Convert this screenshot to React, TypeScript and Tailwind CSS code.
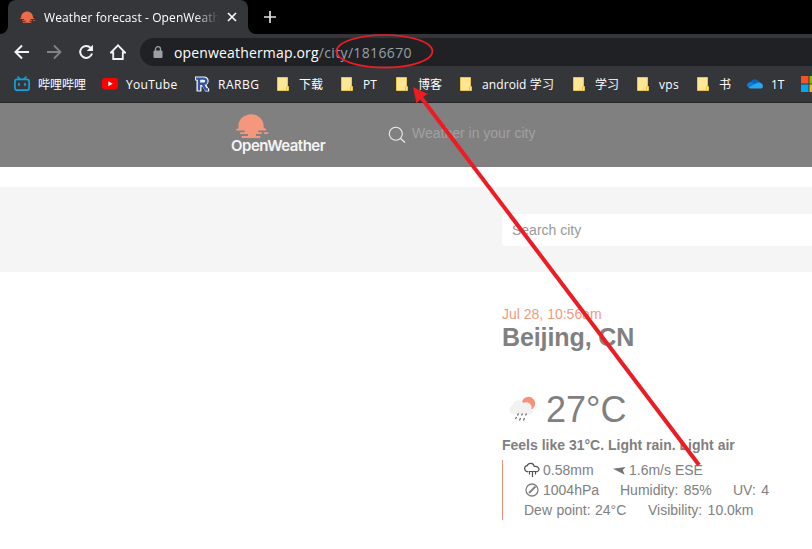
import React from "react";

const uiFont = "font-['Open_Sans','Noto_Sans_CJK_SC',sans-serif]";

function Sun({ className, fill }: { className: string; fill: string }) {
  return (
    <svg className={className} viewBox="0 0 34 26" fill={fill}>
      <path d="M2.500 13.500C1.500 6 8 .2 15 .2S28.500 6 27.600 13.500L29.500 14.700c1.300 0 1.300 1.700 0 1.700H23c-1.300 0-1.300 1.800 0 1.800h2c1.300 0 1.300 1.900 0 1.900h-5v2h3.500c1.300 0 1.300 1.900 0 1.900H6.500c-1.300 0-1.300-1.900 0-1.900H12v-2H5c-1.300 0-1.300-1.900 0-1.900h3c1.300 0 1.300-1.800 0-1.800H.9c-1.300 0-1.300-1.700 0-1.700h1.600z" />
      <rect x="27.800" y="18.200" width="4.600" height="1.900" rx=".95" />
    </svg>
  );
}

function Folder() {
  return (
    <svg className="block h-[14px] w-3" viewBox="0 0 12 14">
      <path d="M.5.500h10v9h1v4H.5z" fill="#ffe694" stroke="#e9c44c" />
      <path d="M9.500 9.500v4" stroke="#e9c44c" />
    </svg>
  );
}

function Bili() {
  return (
    <svg className="block size-4" viewBox="0 0 16 16" fill="none" stroke="#12a2d9" strokeWidth="1.7" strokeLinecap="round">
      <rect x=".9" y="3.400" width="14.200" height="10.800" rx="2.300" />
      <path d="M4 1l2 2M12 1l-2 2M5 7.500v1.700M11 7.500v1.700" />
    </svg>
  );
}

function YouTube() {
  return (
    <svg className="block size-4" viewBox="0 0 16 16">
      <rect y="2" width="16" height="11.400" rx="2.800" fill="#f00" />
      <path d="M6.300 5.200v5l4.400-2.500z" fill="#fff" />
    </svg>
  );
}

function Rarbg() {
  return (
    <svg className="block size-4" viewBox="0 0 16 16">
      <path d="M1 .5h9c5.500 0 6 6.700 2.500 8.300l1.700 3.400h1v3.300h-4L8.500 10.500H7.500v5H2.500V4.500H1z" fill="#f1f4fb" />
      <path d="M2 2.600h7.500c3.800 0 3.800 5.200 0 5.200H5.300M5 2.600v11.900M8.800 8l3 5.500h2.200" fill="none" stroke="#35549f" strokeWidth="2.400" />
    </svg>
  );
}

function OneDrive() {
  return (
    <svg className="block size-4" viewBox="0 0 16 16">
      <path d="M3 8.500C3.500 3.500 8.500 1 12.300 5.500L14 9z" fill="#0864b4" />
      <path d="M0 9.800c0-3 3-4.700 5.500-3.200L11 11H3c-2 0-3-.2-3-1.200z" fill="#107ed6" />
      <path d="M1.200 11.700l8-4.500c3-2 6.800 0 6.800 2.700 0 2-1 2.700-3 2.700H3.300z" fill="#28a8ea" />
    </svg>
  );
}

function Microsoft() {
  return (
    <svg className="block size-4" viewBox="0 0 16 16">
      <path d="M0 0h7.500v7.500H0z" fill="#f35325" />
      <path d="M8.500 0H16v7.500H8.500z" fill="#81bc06" />
      <path d="M0 8.500h7.500V16H0z" fill="#05a6f0" />
      <path d="M8.500 8.500H16V16H8.500z" fill="#ffba08" />
    </svg>
  );
}

const bookmarks = [
  { label: "哔哩哔哩", icon: <Bili />, width: "w-[88px]", gap: "gap-2" },
  { label: "YouTube", icon: <YouTube />, width: "w-[92px] tracking-[0.3px]", gap: "gap-2" },
  { label: "RARBG", icon: <Rarbg />, width: "w-[83px] tracking-[0.5px]", gap: "gap-2" },
  { label: "下载", icon: <Folder />, width: "w-[64px]", gap: "gap-2.5" },
  { label: "PT", icon: <Folder />, width: "w-[55px]", gap: "gap-2.5" },
  { label: "博客", icon: <Folder />, width: "w-[64px]", gap: "gap-2.5" },
  { label: "android 学习", icon: <Folder />, width: "w-[113px] tracking-[0.1px]", gap: "gap-2.5" },
  { label: "学习", icon: <Folder />, width: "w-[64px]", gap: "gap-2.5" },
  { label: "vps", icon: <Folder />, width: "w-[60px] tracking-[0.3px]", gap: "gap-2.5" },
  { label: "书", icon: <Folder />, width: "w-[50px]", gap: "gap-2.5" },
  { label: "1T", icon: <OneDrive />, width: "w-[54px]", gap: "gap-2" },
  { label: "", icon: <Microsoft />, width: "w-[30px]", gap: "gap-2" },
];

function TabStrip() {
  return (
    <div className="flex h-[34px] bg-black">
      <div className="flex w-2 items-end bg-[#35363a]">
        <div className="h-full w-full rounded-br-lg bg-black" />
      </div>
      <div className="flex w-60 items-center rounded-t-lg bg-[#35363a] pl-3">
        <Sun className="h-[13px] w-4 shrink-0" fill="#ee6b4a" />
        <div className="ml-2 w-[175px] overflow-hidden whitespace-nowrap pt-px text-xs tracking-[0.1px] text-white [mask-image:linear-gradient(to_right,black_86%,transparent)]">
          Weather forecast - OpenWeath
        </div>
        <svg className="ml-[7px] size-3 shrink-0" viewBox="0 0 12 12" stroke="#fff" strokeWidth="1.600">
          <path d="M2 2l8 8M10 2l-8 8" />
        </svg>
      </div>
      <div className="w-2 bg-[#35363a]">
        <div className="h-full w-full rounded-bl-lg bg-black" />
      </div>
      <svg className="ml-2 mt-[11px] size-3" viewBox="0 0 12 12" stroke="#dfe1e5" strokeWidth="1.700">
        <path d="M6 0v12M0 6h12" />
      </svg>
    </div>
  );
}

function Toolbar() {
  return (
    <div className="flex h-[34px] items-center pt-[2px]">
      <svg className="ml-[14px] h-4 w-4 shrink-0" viewBox="0 0 16 16" fill="none" stroke="#f1f3f4" strokeWidth="2">
        <path d="M15 8H2M8 1.500L1.500 8 8 14.500" />
      </svg>
      <svg className="ml-4 h-4 w-4 shrink-0" viewBox="0 0 16 16" fill="none" stroke="#828387" strokeWidth="1.800">
        <path d="M1 8h13M8 1.500L14.500 8 8 14.500" />
      </svg>
      <svg className="ml-4 h-4 w-4 shrink-0" viewBox="0 0 16 16" fill="none" stroke="#f1f3f4" strokeWidth="2">
        <path d="M14 9.500A6 6 0 1 1 12.700 3.900" />
        <path d="M15 .7V7H8.700z" fill="#f1f3f4" stroke="none" />
      </svg>
      <svg className="ml-4 h-4 w-4 shrink-0" viewBox="0 0 16 16" fill="none" stroke="#f1f3f4" strokeWidth="1.800">
        <path d="M1 8.500L8 1.300l7 7.200h-2.200V15H3.200V8.500z" />
      </svg>
      <div className="ml-[14px] flex h-7 flex-1 items-center rounded-l-full bg-[#202124] pl-[13px]">
        <svg className="h-3 w-[10px]" viewBox="0 0 10 12">
          <path d="M1 5h8v6.500H1z" fill="#9aa0a6" stroke="#9aa0a6" />
          <path d="M2.500 5V3a2.500 2.300 0 0 1 5 0v2" fill="none" stroke="#9aa0a6" strokeWidth="1.300" />
        </svg>
        <div className="ml-[11px] whitespace-nowrap text-[14px] tracking-[0.16px] text-white">
          openweathermap.org<span className="tracking-[0.36px] text-[#9aa0a6]">/city/1816670</span>
        </div>
      </div>
    </div>
  );
}

function BookmarkBar() {
  return (
    <div className="flex h-[34px] overflow-hidden pl-[14px] text-xs text-white">
      {bookmarks.map((b, i) => (
        <div key={i} className={`flex h-8 shrink-0 items-center whitespace-nowrap ${b.width} ${b.gap}`}>
          {b.icon}
          <span className="pt-[2px]">{b.label}</span>
        </div>
      ))}
    </div>
  );
}

function Annotation() {
  return (
    <svg className="pointer-events-none absolute inset-0 h-[549px] w-[812px]" viewBox="0 0 812 549">
      <ellipse cx="384.500" cy="51.300" rx="48" ry="16.300" fill="none" stroke="#ed1c24" strokeWidth="1.700" />
      <path d="M699 465L420 96" stroke="#ed1c24" strokeWidth="4" />
      <path d="M413 87L416.500 103.500 420.500 99 425 95.500 428 94z" fill="#ed1c24" />
    </svg>
  );
}

export default function App() {
  return (
    <div className="relative h-[549px] w-[812px] overflow-hidden bg-white font-['Liberation_Sans',sans-serif]">
      <header className={`h-[103px] border-b border-[#242528] bg-[#35363a] ${uiFont}`}>
        <TabStrip />
        <Toolbar />
        <BookmarkBar />
      </header>

      <nav className="flex h-16 bg-[#808080]">
        <div className="ml-[231px] w-[157px] pt-[11px]">
          <Sun className="ml-[5px] h-[26px] w-[34px]" fill="#f5977c" />
          <div className="-mt-[3px] whitespace-nowrap font-['Inter',sans-serif] text-[15px] font-semibold leading-[18px] tracking-[-0.5px] text-[#f4f4f4]">OpenWeather</div>
        </div>
        <svg className="mt-[23px] h-[18px] w-[18px]" viewBox="0 0 18 18" fill="none" stroke="#eee" strokeWidth="1.100">
          <circle cx="7.800" cy="7.800" r="6.500" />
          <path d="M12.500 12.500l4.500 4" />
        </svg>
        <div className="ml-[6px] pt-[20px] text-[14px] leading-5 text-[#a0a0a0]">Weather in your city</div>
      </nav>

      <section className="mt-5 h-[85px] bg-[#f5f5f5] pl-[502px] pt-[27px]">
        <div className="h-8 rounded-l bg-white pl-[10px] text-[14px] leading-8 text-[#999]">Search city</div>
      </section>

      <main className="ml-[502px] whitespace-nowrap pt-[34px] text-[14px] leading-5 text-[#808080]">
        <div className="h-4 leading-4 text-[#f09a80]">Jul 28, 10:56am</div>
        <h2 className="h-[30px] text-[25px] font-bold leading-[30px] tracking-[-0.1px]">Beijing, CN</h2>
        <div className="mt-9 flex h-[42px] items-center">
          <svg className="ml-[7px] h-[28px] w-7" viewBox="0 0 28 28">
            <circle cx="19.500" cy="8.500" r="6.700" fill="#f4937c" />
            <path d="M4.500 19.500A5 5 0 0 1 3.300 10.200 6.200 6.200 0 0 1 14.500 8a5.500 5.500 0 0 1 8 6 3.200 3.200 0 0 1-1 5.500z" fill="#f2f2f2" />
            <path d="M9.500 18.500l-1 2M13.500 18.500l-1 2M17.500 18.500l-1 2M7.500 22l-1 2M11.500 23l-1 2.500M15.500 23l-1 2.500" stroke="#6b6b6b" strokeWidth="1.300" />
          </svg>
          <span className="ml-[9px] pt-[2px] text-[36px] leading-10">27°C</span>
        </div>
        <div className="mt-[5px] h-[25px] font-bold leading-[20px]">Feels like 31°C. Light rain. Light air</div>
        <div className="border-l border-[#ed8f75] pl-[21px]">
          <div className="flex h-5 items-center">
            <svg className="h-4 w-4" viewBox="0 0 16 16" fill="none" stroke="#505050" strokeWidth="1.200">
              <path d="M4 9.800C-.3 9.500-.3 4 3.200 3.700 4.300.4 9.600.4 10.300 4.500 15.500 3.500 16.500 9 12.500 9.800M4.500 9.500h8M5.500 9.500v3M8.500 9.500V15M11.500 9.500v3" />
            </svg>
            <span className="ml-[3px] w-[70px]">0.58mm</span>
            <svg className="h-3 w-[13px]" viewBox="0 0 13 12"><path d="M0 4.700L12.500 3 9.800 6l1.900 4.800z" fill="#757575" /></svg>
            <span className="ml-[3px]">1.6m/s ESE</span>
          </div>
          <div className="flex h-5 items-center">
            <svg className="h-4 w-4" viewBox="0 0 16 16" fill="none" stroke="#808080" strokeWidth="1.300">
              <circle cx="8" cy="8" r="6" />
              <path d="M5 11l6.500-6.500" strokeWidth="1.800" />
            </svg>
            <span className="ml-[3px] w-[77px]">1004hPa</span>
            <span className="w-[113px] [word-spacing:1.500px]">Humidity: 85%</span>
            <span className="[word-spacing:1.500px]">UV: 4</span>
          </div>
          <div className="flex h-5 items-center [word-spacing:0.500px]">
            <span className="w-[124px]">Dew point: 24°C</span>
            <span className="[word-spacing:1.500px]">Visibility: 10.0km</span>
          </div>
        </div>
      </main>
      <Annotation />
    </div>
  );
}
